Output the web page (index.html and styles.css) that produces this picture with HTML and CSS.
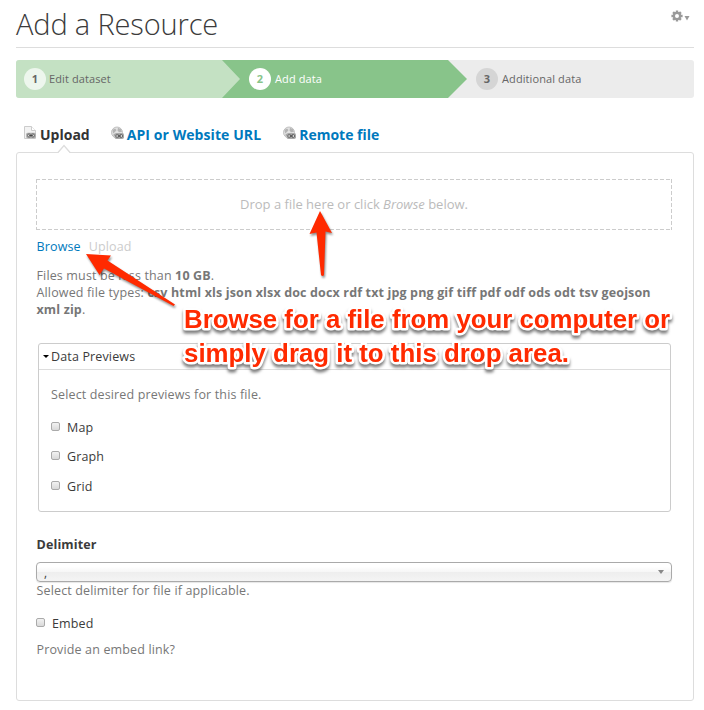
FILE: index.html
```html
<!DOCTYPE html>
<html lang="en">
<head>
<meta charset="utf-8">
<title>Add a Resource</title>
<link rel="stylesheet" href="styles.css">
</head>
<body>
<svg class="defs" width="0" height="0" aria-hidden="true">
  <defs>
    <symbol id="link" viewBox="0 0 8 5">
      <rect width="8" height="5" rx="1.5" fill="#aaa"/>
      <circle cx="2.4" cy="2.5" r="1.3" fill="#ddd" stroke="#666" stroke-width=".8"/>
      <circle cx="5.6" cy="2.5" r="1.3" fill="#ddd" stroke="#666" stroke-width=".8"/>
      <path d="M2.5 2.5h3" stroke="#444" stroke-width=".8"/>
    </symbol>
    <symbol id="globe" viewBox="0 0 13 13">
      <circle cx="6" cy="6" r="5.5" fill="#e2e2e2" stroke="#b5b5b5" stroke-width=".8"/>
      <path d="M1.5 3.5 4 2l1.5 1.5L4 5.5 2 7ZM7 1.2l3 1.5 1 2.5-3 .5L6.5 4Z" fill="#b4b4b4"/>
      <path d="M2 8.5 4 7l1 4Z" fill="#aaa"/>
      <use href="#link" x="3.5" y="6.5" width="9.5" height="6"/>
    </symbol>
  </defs>
</svg>
<main class="page">
  <header class="header">
    <h1 class="title">Add a Resource</h1>
    <svg class="gear" viewBox="0 0 20 14" width="20" height="14">
      <g stroke="#999" stroke-width="2.4"><path d="M6 .4v11.2M.4 6h11.2M2.1 2.1l7.8 7.8M9.900 2.1 2.1 9.900"/></g>
      <circle cx="6" cy="6" r="3.1" fill="#fff" stroke="#999" stroke-width="2.2"/>
      <path d="M13.500 6h5L16 10.500Z" fill="#999"/>
    </svg>
  </header>
  <ol class="steps">
    <li class="step done"><span class="num">1</span><span class="step-label">Edit dataset</span></li>
    <li class="step active"><span class="num">2</span><span class="step-label">Add data</span></li>
    <li class="step"><span class="num">3</span><span class="step-label">Additional data</span></li>
  </ol>
  <nav class="tabs">
    <a class="tab current"><svg class="tab-icon" width="13" height="14" viewBox="0 0 13 14"><path d="M.5.5h7l4 4v8H.5Z" fill="#f3f3f3" stroke="#ccc"/><path d="M7.500.5v4h4" fill="#fff" stroke="#ccc"/><use href="#link" x="2" y="6.500" width="10" height="6"/></svg><span>Upload</span></a>
    <a class="tab api"><svg class="tab-icon" width="13" height="14"><use href="#globe" width="13" height="14"/></svg><span>API or Website URL</span></a>
    <a class="tab"><svg class="tab-icon" width="13" height="14"><use href="#globe" width="13" height="14"/></svg><span>Remote file</span></a>
  </nav>
  <section class="panel">
    <svg class="notch" width="14" height="9" viewBox="0 0 14 9"><path d="M1 8.500 7 1.500l6 7" fill="#fff" stroke="#ddd" stroke-width="1.300"/><path d="M2 8.500h10" stroke="#fff"/></svg>
    <div class="dropzone"><span>Drop a file here or click <em>Browse</em> below.</span></div>
    <div class="actions"><a class="browse">Browse</a><span class="upload">Upload</span></div>
    <p class="limits">Files must be less than <b>10 GB</b>.<br>Allowed file types: <b>csv html xls json xlsx doc docx rdf txt jpg png gif tiff pdf odf ods odt tsv geojson<br>xml zip</b>.</p>
    <div class="previews">
      <div class="legend"><span class="caret"></span>Data Previews</div>
      <div class="previews-body">
        <p class="hint">Select desired previews for this file.</p>
        <label class="check"><i class="box"></i>Map</label>
        <label class="check"><i class="box"></i>Graph</label>
        <label class="check"><i class="box"></i>Grid</label>
      </div>
    </div>
    <h2 class="field-title">Delimiter</h2>
    <div class="select"><span class="comma">,</span><span class="select-arrow"></span></div>
    <p class="help">Select delimiter for file if applicable.</p>
    <label class="check embed"><i class="box"></i>Embed</label>
    <p class="help">Provide an embed link?</p>
  </section>
</main>
<svg class="annotation" width="704" height="710" viewBox="0 0 704 710">
  <g class="arrows">
    <path d="M320 211 332 233 325.500 231.500 324 275Q322.500 277 321 275L316.500 232.500 309.500 234Z"/>
    <path d="M86 254 111 255.500 107.500 260.500 175 304.500 173.500 306 104 268.500 99.500 275Z"/>
  </g>
  <g class="note">
    <g class="outline" aria-hidden="true">
      <text x="184" y="328" textLength="486" lengthAdjust="spacingAndGlyphs">Browse for a file from your computer or</text>
      <text x="184" y="362" textLength="385" lengthAdjust="spacingAndGlyphs">simply drag it to this drop area.</text>
    </g>
  </g>
</svg>
</body>
</html>
```
FILE: styles.css
```css
* { box-sizing: border-box; }
body { margin: 0; background: #fff; color: #3b3b3b; font: 12.5px/17px "Open Sans", sans-serif; letter-spacing: .145px; }
h1, h2, p, ol { margin: 0; padding: 0; }
.defs { position: absolute; }
.page { height: 710px; padding: 0 10px 0 16px; overflow: hidden; white-space: nowrap; }
.header { display: flex; justify-content: space-between; height: 48px; border-bottom: 1px solid #ddd; }
.title { font-size: 29px; font-weight: 300; line-height: 47px; letter-spacing: -.15px; }
.gear { margin: 10px 3px 0 0; }

.steps { display: flex; height: 38px; margin-top: 12px; list-style: none; border-radius: 3px; overflow: hidden; background: #ececec; font-size: 11px; letter-spacing: .1px; color: #666; }
.step { display: flex; align-items: center; width: 227px; padding-left: 9px; }
.done { width: 225px; padding-left: 8px; background: #c4e1c3; }
.active { width: 245px; margin-left: -19px; padding-left: 27px; background: #88c48a; color: #fff; clip-path: polygon(0 0, 226px 0, 100% 50%, 226px 100%, 0 100%, 18px 50%); }
.num { display: grid; place-items: center; width: 22px; height: 22px; margin-right: 4px; padding-bottom: 1px; border-radius: 50%; background: #d5d5d5; font-weight: 700; }
.step-label { padding-bottom: 1px; }
.done .num { margin-right: 3px; background: #edf6ed; }
.active .num { background: #fff; color: #88c48a; }

.tabs { display: flex; height: 54px; padding: 28px 0 0 8px; font-size: 14px; letter-spacing: 0; font-weight: 700; line-height: 14px; color: #0079bd; }
.tab { display: flex; margin-right: 21px; }
.tab span { padding-top: 0; }
.api { letter-spacing: .08px; margin-right: 22px; }
.tab-icon { margin: -2px 3px 0 0; }
.tabs { padding-top: 30px; }
.current { color: #333; }

.panel { position: relative; height: 549px; padding: 26px 21px 0 19px; border: 1px solid #ddd; border-radius: 3px; }
.notch { position: absolute; left: 40px; top: -9px; }
.dropzone { display: flex; align-items: center; justify-content: center; height: 51px; font-size: 13px; letter-spacing: 0; color: #bbb; background: linear-gradient(90deg, #ccc 60%, transparent 0) 0 0 / 6px 1px repeat-x, linear-gradient(90deg, #ccc 60%, transparent 0) 0 100% / 6px 1px repeat-x, linear-gradient(#ccc 60%, transparent 0) 0 0 / 1px 6px repeat-y, linear-gradient(#ccc 60%, transparent 0) 100% 0 / 1px 6px repeat-y; }
.actions { display: flex; gap: 8px; margin: 8px 0 0 .5px; }
.browse { color: #0079bd; }
.upload { color: #ccc; }
.limits { margin: 12px 0 0 .5px; color: #777; }
.previews { height: 169px; margin: 25px 0 0 2px; width: 633px; border: 1px solid #ccc; border-radius: 3px; }
.legend { display: flex; align-items: center; height: 26px; padding-left: 4px; border-bottom: 1px solid #ddd; }
.caret { width: 0; margin-right: 2px; border: 3px solid transparent; border-top: 3px solid #000; border-bottom: 0; }
.previews-body { padding: 16px 0 0 12px; }
.hint { height: 17px; margin-bottom: 16px; color: #777; }
.check { display: flex; height: 17px; margin-bottom: 12.4px; color: #3b3b3b; }
.box { width: 9px; height: 9px; margin: 3px 7px 0 0; border: 1px solid #aaa; border-radius: 2px; background: linear-gradient(#f2f2f2, #d9d9d9); }
.field-title { margin: 24px 0 0 .5px; font-size: 12.5px; line-height: 17px; }
.select { display: flex; align-items: center; justify-content: space-between; height: 20px; margin-top: 9px; padding: 0 7px; border: 1px solid #aaa; border-radius: 4px; background: linear-gradient(#fff 20%, #f6f6f6 50%, #eee 52%, #f4f4f4); box-shadow: 0 1px 1px rgba(0,0,0,.1); font-size: 12px; }
.comma { height: 17px; }
.select-arrow { border: 3px solid transparent; border-top: 4.5px solid #888; border-bottom: 0; }
.help { margin-left: .5px; color: #777; }
.embed { margin: 16px 0 9px; }

.annotation { position: absolute; left: 0; top: 0; letter-spacing: 0; pointer-events: none; }
.arrows, .note { fill: #ff2a00; }
.arrows { filter: drop-shadow(1px 2px 1px rgba(0,0,0,.45)); }
.note { font: bold 25px "Liberation Sans", sans-serif; filter: drop-shadow(0 3px 1.5px rgba(0,0,0,.5)); }
.outline { stroke: #fff; stroke-width: 5px; stroke-linejoin: round; paint-order: stroke; }
```
